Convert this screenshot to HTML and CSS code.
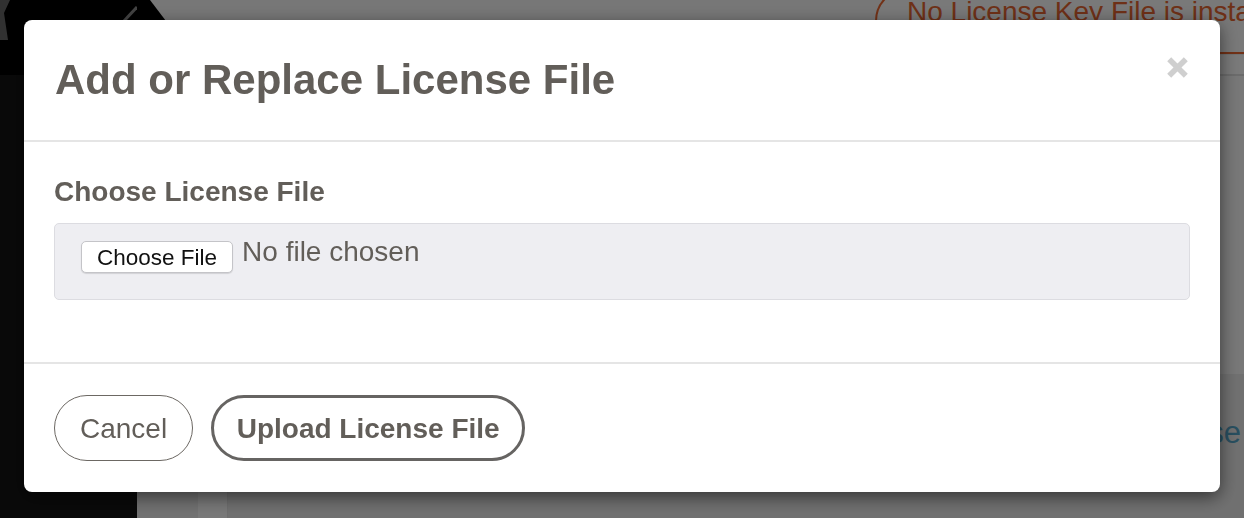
FILE: index.html
```html
<!DOCTYPE html>
<html lang="en">
<head>
<meta charset="utf-8">
<title>Add or Replace License File</title>
<link rel="stylesheet" href="styles.css">
</head>
<body>
<div class="page">
  <aside class="sidebar">
    <div class="sidebar-logo">
      <svg class="logo-mark" width="137" height="75" viewBox="0 0 137 75" aria-hidden="true">
        <polygon points="0,0 10,0 4,13 8,40 0,40" fill="#5a5a5a"/>
        <line x1="137" y1="7" x2="110" y2="36" stroke="#7a7a7a" stroke-width="3"/>
      </svg>
    </div>
    <div class="sidebar-nav"></div>
  </aside>
  <div class="main">
    <header class="topbar">
      <div class="logo-tail"></div>
      <div class="alert-pill">No License Key File is installed</div>
    </header>
    <nav class="subnav"></nav>
    <section class="content">
      <div class="content-rail"></div>
      <div class="content-gutter"></div>
      <div class="content-panel">
        <div class="panel-top"></div>
        <div class="panel-card"><a class="panel-link">Upload License</a></div>
      </div>
    </section>
  </div>
</div>

<div class="backdrop"></div>

<div class="modal-wrap">
  <div class="modal" role="dialog" aria-labelledby="modal-title">
    <div class="modal-header">
      <h2 class="modal-title" id="modal-title">Add or Replace License File</h2>
      <button class="close" type="button" aria-label="Close">
        <svg width="21" height="21" viewBox="0 0 21 21" aria-hidden="true">
          <path d="M2.2 2.2 L18.8 18.8 M18.8 2.2 L2.2 18.8" stroke="#cfcfcf" stroke-width="5.6" stroke-linecap="butt" fill="none"/>
        </svg>
      </button>
    </div>
    <div class="modal-body">
      <label class="field-label">Choose License File</label>
      <div class="file-box">
        <span class="file-btn">Choose File</span>
        <span class="file-name">No file chosen</span>
      </div>
    </div>
    <div class="modal-footer">
      <button class="btn btn-cancel" type="button">Cancel</button>
      <button class="btn btn-upload" type="button">Upload License File</button>
    </div>
  </div>
</div>
</body>
</html>
```

FILE: styles.css
```css
* {
  box-sizing: border-box;
}

html,
body {
  margin: 0;
  padding: 0;
}

body {
  width: 1244px;
  height: 518px;
  overflow: hidden;
  font-family: "Liberation Sans", Arial, Helvetica, sans-serif;
  background: #d8d8d8;
}

/* ---------- underlying page ---------- */

.page {
  display: flex;
  height: 518px;
}

.sidebar {
  width: 137px;
  flex: none;
  display: flex;
  flex-direction: column;
  background: #121212;
}

.sidebar-logo {
  height: 75px;
  background: #000;
}

.logo-mark {
  display: block;
}

.sidebar-nav {
  flex: 1;
}

.main {
  flex: 1;
  display: flex;
  flex-direction: column;
  min-width: 0;
  overflow: hidden;
  background: #d6d6d6;
}

.topbar {
  height: 55px;
  flex: none;
  display: flex;
  align-items: flex-start;
  background: #d9d9d9;
  border-bottom: 1px solid #cfcfcf;
  overflow: hidden;
}

.logo-tail {
  width: 54px;
  height: 54px;
  flex: none;
  background: #000;
  clip-path: polygon(0 0, 13px 0, 54px 54px, 0 54px);
}

.alert-pill {
  flex: none;
  margin: -12px 0 0 684px;
  height: 66px;
  padding: 0 40px 0 30px;
  border: 2px solid #cf5a2a;
  border-radius: 33px;
  font-size: 28px;
  line-height: 44px;
  color: #c9582b;
  white-space: nowrap;
  background: #dcdcdc;
}

.subnav {
  height: 21px;
  flex: none;
  background: #dedede;
  border-bottom: 2px solid #c4c4c4;
}

.content {
  flex: 1;
  display: flex;
}

.content-rail {
  width: 61px;
  flex: none;
  background: #cfcfcf;
}

.content-gutter {
  width: 30px;
  flex: none;
  background: #dcdcdc;
  border-right: 1px solid #c8c8c8;
}

.content-panel {
  flex: 1;
  display: flex;
  flex-direction: column;
}

.panel-top {
  height: 298px;
  flex: none;
  background: #dadada;
}

.panel-card {
  flex: 1;
  padding: 39px 3px 0 0;
  text-align: right;
  background: #cdcdcd;
}

.panel-link {
  font-size: 31px;
  line-height: 40px;
  color: #4a90ae;
}

/* ---------- backdrop + modal ---------- */

.backdrop {
  position: fixed;
  inset: 0;
  background: rgba(0, 0, 0, 0.45);
}

.modal-wrap {
  position: fixed;
  inset: 0;
  padding: 20px 24px;
  display: flex;
  align-items: flex-start;
}

.modal {
  width: 100%;
  background: #fff;
  border-radius: 8px;
  box-shadow: 0 5px 18px rgba(0, 0, 0, 0.55);
}

.modal-header {
  display: flex;
  justify-content: space-between;
  align-items: flex-start;
  padding: 36px 30px 37px 31px;
  border-bottom: 2px solid #e5e5e5;
}

.modal-title {
  margin: 0;
  font-size: 42px;
  line-height: 47px;
  font-weight: 700;
  color: #625e59;
}

.close {
  width: 21px;
  height: 21px;
  margin: 1px 2px 0 0;
  padding: 0;
  border: 0;
  background: none;
  cursor: pointer;
}

.close svg {
  display: block;
}

.modal-body {
  padding: 34px 30px 62px;
}

.field-label {
  display: block;
  margin-bottom: 15px;
  font-size: 28px;
  line-height: 32px;
  font-weight: 700;
  color: #625e59;
}

.file-box {
  height: 77px;
  display: flex;
  align-items: flex-start;
  gap: 9px;
  padding: 12px 26px 0;
  background: #eeeef2;
  border: 1px solid #dcdce1;
  border-radius: 5px;
}

.file-btn {
  margin-top: 5px;
  height: 32px;
  padding: 2px 15px 0;
  font-size: 22.5px;
  line-height: 28px;
  color: #111;
  background: #fff;
  border: 1px solid #c4c4c8;
  border-radius: 5px;
  box-shadow: 0 1px 1px rgba(0, 0, 0, 0.12);
  white-space: nowrap;
}

.file-name {
  font-size: 28px;
  line-height: 32px;
  color: #625e59;
  white-space: nowrap;
}

.modal-footer {
  display: flex;
  gap: 18px;
  padding: 31px 30px;
  border-top: 2px solid #e5e5e5;
}

.btn {
  height: 66px;
  border-radius: 33px;
  background: #fff;
  font-family: inherit;
  font-size: 28px;
  line-height: 31px;
  color: #625e59;
  cursor: pointer;
  white-space: nowrap;
}

.btn-cancel {
  padding: 0 25px;
  border: 1px solid #6c6863;
}

.btn-upload {
  padding: 0 22.5px;
  border: 3px solid #666462;
  font-weight: 700;
}
```
